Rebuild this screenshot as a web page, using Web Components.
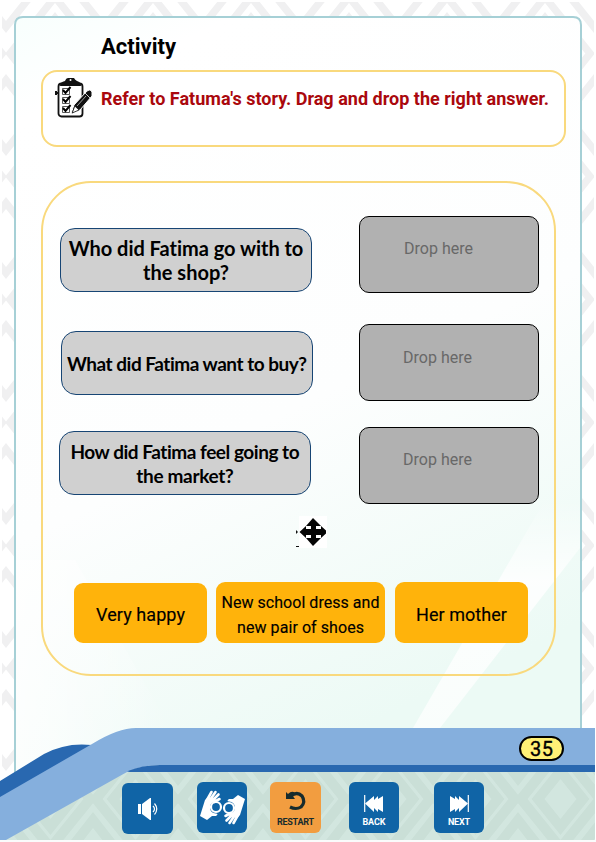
<!DOCTYPE html>
<html lang="en"><head><meta charset="utf-8"><title>Activity</title>
<style>html,body{margin:0;padding:0}body{width:596px;height:842px;overflow:hidden;font-family:Roboto,sans-serif}</style></head>
<body><activity-page></activity-page>
<script>
const define=(name,html,after)=>customElements.define(name,class extends HTMLElement{
  connectedCallback(){ if(this.shadowRoot)return; this.attachShadow({mode:'open'}).innerHTML=html; if(after)after(this); }
});

// One line of text, spaced to a given width
define('fit-line','<style>:host{display:block;white-space:nowrap;width:max-content}</style><slot></slot>',el=>{
  const w=+el.getAttribute('w'), n=el.textContent.length;
  el.style.fontSize=el.getAttribute('size')+'px';
  const now=el.getBoundingClientRect().width;
  const s=(w-now)/n; el.style.letterSpacing=s+'px'; el.style.marginRight=(-s)+'px';
});

define('page-backdrop',`<style>:host{position:absolute;inset:0;z-index:0}svg{display:block}</style>
<svg width="596" height="842" viewBox="0 0 596 842">
<defs>
<pattern id="d" x="6" y="-8" width="98" height="123" patternUnits="userSpaceOnUse">
<g fill="none" stroke="#f0f0f1" stroke-width="7.500">
<path d="M49 5L94 61.500L49 118L4 61.500Z"/><path d="M49 26L77 61.500L49 97L21 61.500Z"/><path d="M49 47L60 61.500L49 76L38 61.500Z"/>
<path d="M-28 0L0 35L28 0M70 0L98 35L126 0M-28 123L0 88L28 123M70 123L98 88L126 123"/></g></pattern>
<pattern id="f" x="8" y="746" width="85" height="106" patternUnits="userSpaceOnUse">
<g fill="none" stroke="#cadfd7" stroke-width="10">
<path d="M42.500 4L82 53L42.500 102L3 53Z"/><path d="M42.500 25L65 53L42.500 81L20 53Z"/><path d="M-25 0L0 32L25 0M60 0L85 32L110 0M-25 106L0 74L25 106M60 106L85 74L110 106"/></g></pattern>
<linearGradient id="p" x1="0" y1="0" x2=".35" y2="1"><stop offset="0" stop-color="#f8fffd"/><stop offset=".12" stop-color="#fff"/><stop offset=".6" stop-color="#fdfefe"/><stop offset="1" stop-color="#ecfaf5"/></linearGradient>
<linearGradient id="w" x1="0" x2="1"><stop offset="0" stop-color="#fff" stop-opacity=".75"/><stop offset="1" stop-color="#fff" stop-opacity="0"/></linearGradient>
<linearGradient id="s" x1="0" y1="0" x2="0" y2="1"><stop offset="0" stop-color="#fff" stop-opacity="0"/><stop offset=".35" stop-color="#fff" stop-opacity=".85"/><stop offset="1" stop-color="#fff" stop-opacity=".7"/></linearGradient>
</defs>
<rect width="596" height="842" fill="#fff"/><rect x="2" y="2" width="592" height="770" fill="url(#d)"/>
<path d="M15 800V25Q15 17 23 17H573Q581 17 581 25V800Z" fill="url(#p)"/>
<path d="M15 560H75L170 728V800H15Z" fill="url(#w)"/>
<path d="M545 500L580 500V548L440 728H413Z" fill="url(#s)"/>
<path d="M15 800V25Q15 17 23 17H573Q581 17 581 25V800" fill="none" stroke="#a6d0d6" stroke-width="2"/>
<path d="M0 781L44 754Q66 742 92 745L125 763L132 770H595V842H0Z" fill="#2968b0"/>
<path d="M0 842V834L125 772H595V840H0Z" fill="#d2e6df"/><path d="M0 842V834L125 772H595V840H0Z" fill="url(#f)"/>
<path d="M0 797L92 744Q118 728 136 728H595V765H160Q137 765 118 777L6 840H0Z" fill="#85afdd"/>
<path d="M128 771Q142 765 160 765H595V771Z" fill="#2968b0"/>
<path d="M0 840H596V842H0Z" fill="#fafbfb"/>
</svg>`);

define('page-title','<style>:host{display:block;height:26px;padding:34px 0 0 101px;line-height:26px;font-weight:700;color:#000}</style><slot></slot>');

define('instruction-box',`<style>:host{box-sizing:border-box;display:flex;width:525px;height:77px;margin:10px 0 0 41px;border:2px solid #f9d97d;border-radius:16px;background:#fff;color:#aa080d;font-weight:700}
svg{width:38px;height:42px;margin:5px 0 0 12px;flex:none}.t{margin:16px 0 0 8px;line-height:22px}</style>
<svg viewBox="0 0 38 42"><rect x="3.500" y="6.500" width="24" height="33" rx="3" fill="#fff" stroke="#111" stroke-width="1.800"/>
<path d="M5 9Q5 5 10 4Q11 1 13 1H19Q20 3 22 4Q26 5 26 9Z" fill="#111"/><circle cx="15.500" cy="3" r="1" fill="#fff"/>
<path d="M1 14V18M3 16H1" stroke="#111" stroke-width="2"/>
<g fill="none" stroke="#444" stroke-width=".9"><path d="M7.500 11.500H14.500V17.500H7.500ZM7.500 20.500H14.500V26.500H7.500ZM7.500 29.500H14.500V35.500H7.500Z"/><path d="M8 13L10.500 16L15.500 10M8 22L10.500 25L15.500 19M8 31L10.500 34L15.500 28" stroke="#000" stroke-width="2"/></g>
<path d="M16 37L19 28L31 15Q35 11 37 15V19L25 33Z" fill="#111" stroke="#fff" stroke-width="1"/><path d="M17.200 36L19.800 29L24 33Z" fill="#fff" stroke="#111" stroke-width=".8"/><path d="M22 29L31 19" stroke="#ddd" stroke-width=".7"/><path d="M30 16L35 21" stroke="#fff" stroke-width=".8"/></svg><div class="t"><slot></slot></div>`);

define('match-board',`<style>:host{box-sizing:border-box;display:flex;flex-direction:column;width:515px;height:495px;margin:34px 0 0 41px;border:2px solid #f9d97d;border-radius:50px;padding-top:33px}</style><slot></slot>`);
define('match-row','<style>:host{display:flex;height:77px;align-items:flex-start;justify-content:space-between;padding-right:15px}</style><slot></slot>');
define('question-card','<style>:host{box-sizing:border-box;width:252px;height:64px;border:1px solid #174574;border-radius:15px;background:#d0d0d0;display:flex;flex-direction:column;align-items:center;justify-content:center;line-height:24px;font-family:Lato,sans-serif;font-weight:700;color:#000;padding-top:2px}</style><slot></slot>');
define('drop-zone','<style>:host{box-sizing:border-box;width:180px;height:77px;border:1px solid #000;border-radius:10px;background:#b1b1b1;color:#686868;line-height:20px;padding:22px 0 0 44px}</style><slot></slot>');

define('move-handle',`<style>:host{display:block;height:32px;margin:12px 0 0 253px}svg{display:block}</style><svg width="32" height="32" viewBox="0 0 32 32"><path d="M3 0H31V32H3Z" fill="#fff"/><path d="M17 2L25 10H20V13H25V10L30 14.500V17.500L25 22V19H20V22H25L17 30L10 22H15V19H10V22L3.500 16L10 10V13H15V10H10Z" fill="#050505"/><path d="M0 14L2 16L0 18ZM0 30H3V31H0Z" fill="#111"/></svg>`);
define('answer-list','<style>:host{display:flex;gap:9px;margin:34px 0 0 31px}</style><slot></slot>');
define('answer-chip','<style>:host{box-sizing:border-box;width:133px;height:61px;border-radius:9px;background:#ffb30b;color:#000;display:flex;flex-direction:column;align-items:center;justify-content:center;line-height:25px;padding-top:4px;-webkit-text-stroke:.15px #000}</style><slot></slot>');
define('page-number','<style>:host{box-sizing:border-box;width:45px;height:25px;margin:60px 0 0 519px;border:2px solid #000;border-radius:13px;background:#fff176;display:flex;align-items:center;justify-content:center;line-height:22px;color:#000;font-weight:400;-webkit-text-stroke:.35px #000}</style><slot></slot>');
define('nav-bar','<style>:host{display:flex;margin:21px 0 0 122px;align-items:flex-start}</style><slot></slot>');
define('nav-button','<style>:host{box-sizing:border-box;width:51px;height:51px;border-radius:6px;background:#1064a6;color:#fff;display:flex;flex-direction:column;align-items:center;line-height:12px;font-weight:700}:host([warm]){background:#f29d40;color:#172b2d}</style><slot></slot>');

const hand='<circle cx="19" cy="25" r="5" fill="none" stroke="#fff" stroke-width="2.200"/><g stroke="#fff" stroke-width="2.600" stroke-linecap="round" fill="none"><path d="M10 18L14.500 10M13 18L18.500 10M15 19L21.500 12.500M17 20L22.500 17"/></g><path d="M3 34L8 18L11 15L18 17L20 19Q13 20 13 25Q13 31 19 31.500Q22 32 19 34H15L10 38Z" fill="#fff"/>';
const icons={
sound:`<svg width="51" height="51" viewBox="0 0 51 51"><path d="M16 21H19V31H16ZM20 21L28 15H29V37H28L20 31Z" fill="#fff"/><path d="M31 23Q34 26 31 29M32.500 20.500Q37 26 32.500 31.500" fill="none" stroke="#fff" stroke-width="1.200"/></svg>`,
sign:`<svg width="50" height="51" viewBox="0 0 50 51"><g>${hand}</g><g transform="rotate(180 25.500 25.500)">${hand}</g></svg>`,
restart:`<svg width="51" height="34" viewBox="0 0 51 34"><path d="M21 14Q27 9 32 14Q36 20 31 25Q26 28 20 25" fill="none" stroke="#172b2d" stroke-width="3.200"/><path d="M16 10L18 12Q22 8 25 11L22 13L25 17H16Z" fill="#172b2d"/></svg>`,
back:`<svg width="50" height="34" viewBox="0 0 50 34"><path d="M15.700 13V30" stroke="#fff" stroke-width="1.200"/><path d="M16 21.500L25 14V18L29 14V17L34 14V30L29 27V30L25 26V30Z" fill="#fff"/></svg>`,
next:`<svg width="50" height="34" viewBox="0 0 50 34"><path d="M34.300 13V30" stroke="#fff" stroke-width="1.200"/><path d="M34 21.500L25 14V18L21 14V17L16 14V30L21 27V30L25 26V30Z" fill="#fff"/></svg>`};
customElements.define('nav-icon',class extends HTMLElement{connectedCallback(){if(!this.shadowRoot)this.attachShadow({mode:'open'}).innerHTML='<style>:host,svg{display:block}</style>'+icons[this.getAttribute('name')]}});

define('activity-page',`<style>:host{display:block;position:relative;width:596px;height:842px;overflow:hidden}main{position:relative;z-index:1;display:flex;flex-direction:column}</style>
<page-backdrop></page-backdrop><main>
<page-title><fit-line w="75" size="22">Activity</fit-line></page-title>
<instruction-box><fit-line w="448" size="18">Refer to Fatuma's story. Drag and drop the right answer.</fit-line></instruction-box>
<match-board>
<match-row style="padding-left:17px"><question-card style="margin-top:12px;padding-top:0"><fit-line w="235" size="20">Who did Fatima go with to</fit-line><fit-line w="86" size="20">the shop?</fit-line></question-card><drop-zone><fit-line w="69" size="16">Drop here</fit-line></drop-zone></match-row>
<match-row style="padding-left:18px;margin-top:31px"><question-card style="margin-top:7px"><fit-line w="240" size="19">What did Fatima want to buy?</fit-line></question-card><drop-zone style="padding-left:43px;padding-top:23px"><fit-line w="69" size="16">Drop here</fit-line></drop-zone></match-row>
<match-row style="padding-left:16px;margin-top:26px"><question-card style="margin-top:4px"><fit-line w="229" size="19">How did Fatima feel going to</fit-line><fit-line w="97" size="19">the market?</fit-line></question-card><drop-zone style="padding-left:43px"><fit-line w="69" size="16">Drop here</fit-line></drop-zone></match-row>
<move-handle></move-handle>
<answer-list><answer-chip style="margin-top:1px;height:60px;padding-top:3px"><fit-line w="89" size="18">Very happy</fit-line></answer-chip><answer-chip style="width:169px"><fit-line w="158" size="16">New school dress and</fit-line><fit-line w="127" size="16">new pair of shoes</fit-line></answer-chip><answer-chip style="margin-left:1px"><fit-line w="91" size="18">Her mother</fit-line></answer-chip></answer-list>
</match-board>
<page-number><fit-line w="24" size="20">35</fit-line></page-number>
<nav-bar><nav-button style="margin-top:1px"><nav-icon name="sound"></nav-icon></nav-button>
<nav-button style="width:50px;margin-left:24px"><nav-icon name="sign"></nav-icon></nav-button>
<nav-button warm style="margin-left:23px"><nav-icon name="restart"></nav-icon><fit-line w="37" size="9">RESTART</fit-line></nav-button>
<nav-button style="width:50px;margin-left:28px"><nav-icon name="back"></nav-icon><fit-line w="23" size="9">BACK</fit-line></nav-button>
<nav-button style="width:50px;margin-left:35px"><nav-icon name="next"></nav-icon><fit-line w="22" size="9">NEXT</fit-line></nav-button></nav-bar>
</main>`);
</script></body></html>
